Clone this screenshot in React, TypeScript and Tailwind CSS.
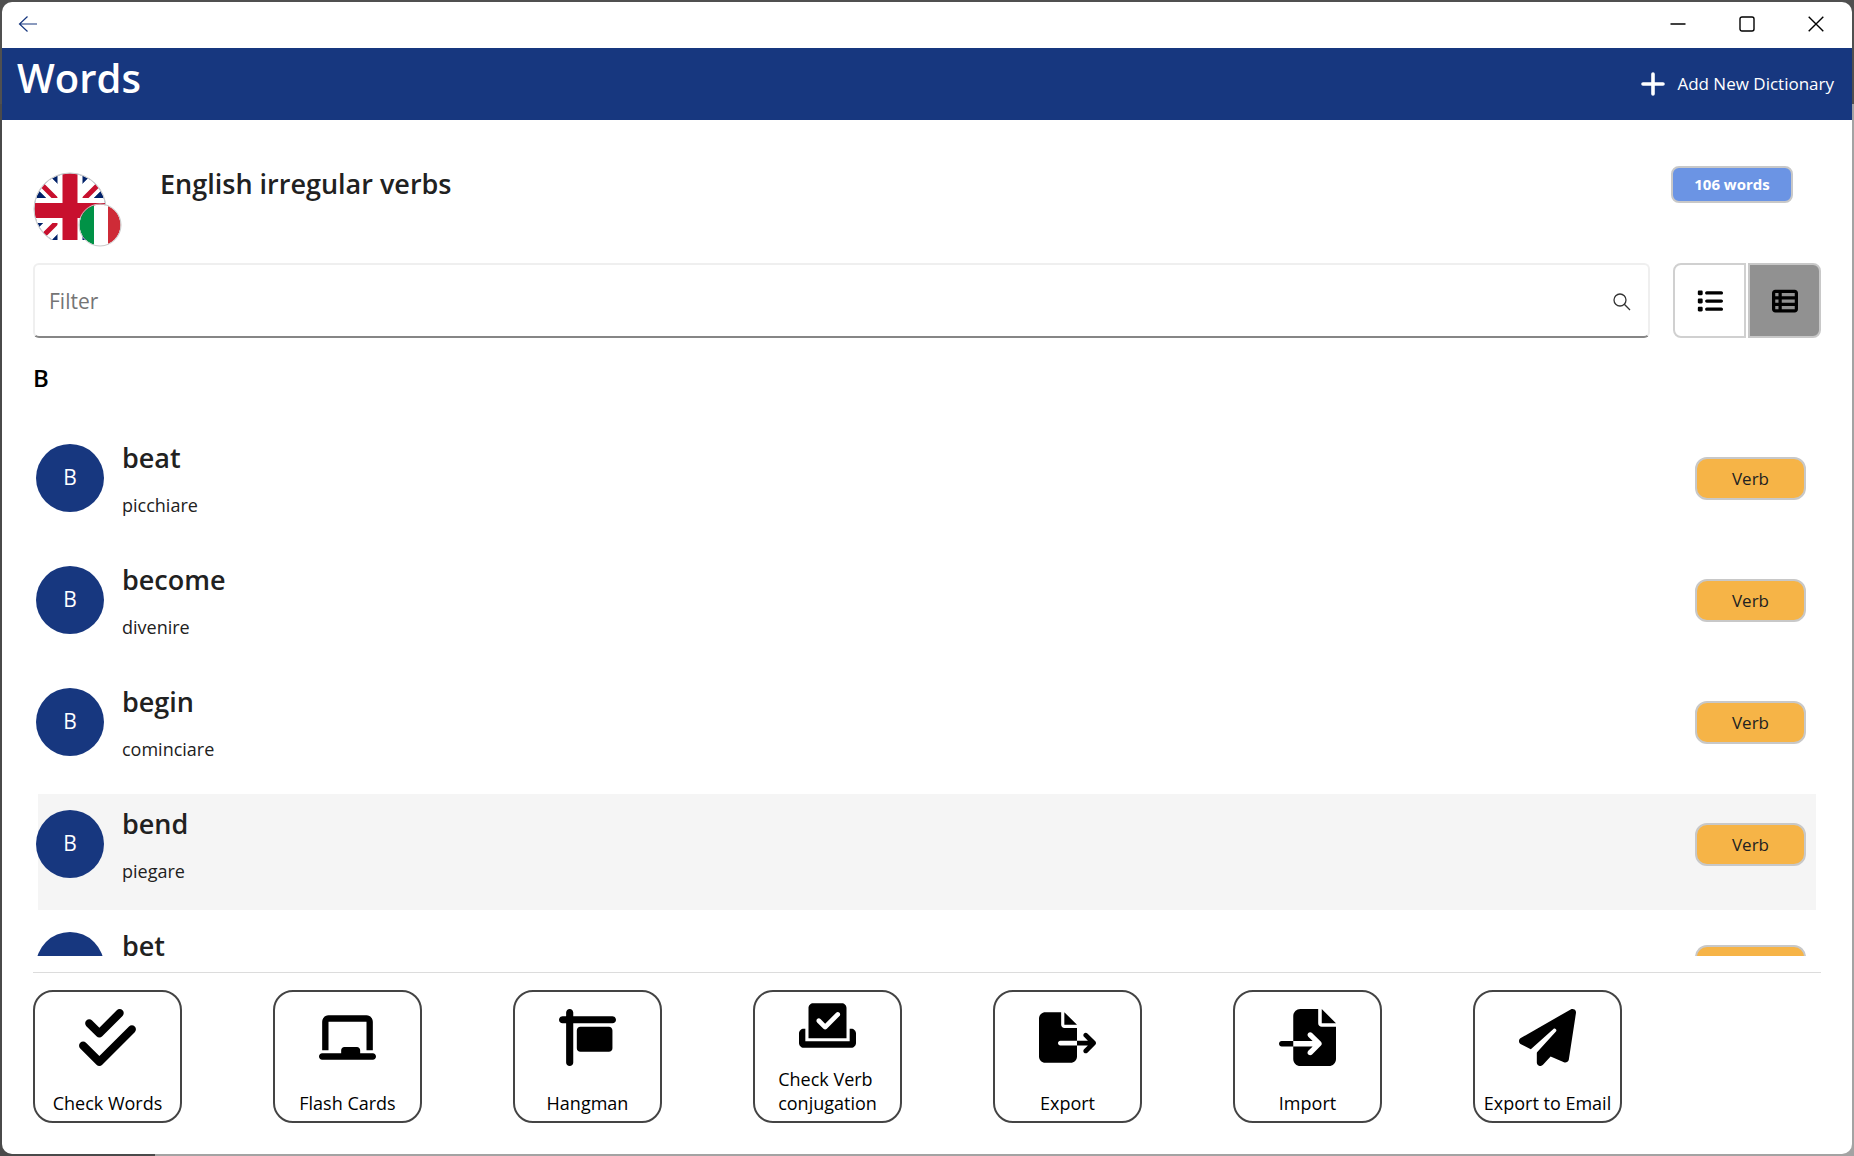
import { useState } from "react";
import type { IconType } from "react-icons";
import {
  FaChalkboard,
  FaCheckDouble,
  FaCheckToSlot,
  FaFileExport,
  FaFileImport,
  FaList,
  FaPaperPlane,
  FaSignHanging,
  FaTableList,
} from "react-icons/fa6";

const words = [
  { word: "beat", translation: "picchiare" },
  { word: "become", translation: "divenire" },
  { word: "begin", translation: "cominciare" },
  { word: "bend", translation: "piegare", active: true },
  { word: "bet", translation: "scommettere" },
];

const actions: { label: string; icon: IconType; size: number }[] = [
  { label: "Check Words", icon: FaCheckDouble, size: 65 },
  { label: "Flash Cards", icon: FaChalkboard, size: 57 },
  { label: "Hangman", icon: FaSignHanging, size: 57 },
  { label: "Check Verb\nconjugation", icon: FaCheckToSlot, size: 57 },
  { label: "Export", icon: FaFileExport, size: 57 },
  { label: "Import", icon: FaFileImport, size: 57 },
  { label: "Export to Email", icon: FaPaperPlane, size: 57 },
];

function TitleBar() {
  return (
    <div className="flex h-[46px] shrink-0 items-center justify-between pr-7 pb-0.5 pl-4">
      <button type="button" aria-label="Back" className="text-[#17377f]">
        <svg width="20" height="18" viewBox="0 0 20 18" fill="none" stroke="currentColor" strokeWidth="1.2">
          <path d="M19 9H1.5M9.5 1.5L1.5 9l8 7.5" />
        </svg>
      </button>
      <div className="flex gap-[53px] text-black">
        <button type="button" aria-label="Minimize">
          <svg width="16" height="16" viewBox="0 0 16 16" fill="none" stroke="currentColor" strokeWidth="1.4">
            <path d="M0.5 8h15" />
          </svg>
        </button>
        <button type="button" aria-label="Maximize">
          <svg width="16" height="16" viewBox="0 0 16 16" fill="none" stroke="currentColor" strokeWidth="1.4">
            <rect x="1" y="1" width="14" height="14" rx="2" />
          </svg>
        </button>
        <button type="button" aria-label="Close">
          <svg width="16" height="16" viewBox="0 0 16 16" fill="none" stroke="currentColor" strokeWidth="1.4">
            <path d="M0.7 0.7l14.6 14.6M15.3 0.7L0.7 15.3" />
          </svg>
        </button>
      </div>
    </div>
  );
}

function LanguageFlags() {
  return (
    <svg width="90" height="78" viewBox="0 0 90 78" role="img" aria-label="English to Italian">
      <defs>
        <clipPath id="uk">
          <circle cx="37" cy="37" r="35.5" />
        </clipPath>
        <clipPath id="uk-base">
          <rect width="90" height="68" />
        </clipPath>
        <clipPath id="it">
          <circle cx="67" cy="53" r="20.5" />
        </clipPath>
      </defs>
      <g clipPath="url(#uk-base)">
        <g clipPath="url(#uk)">
          <rect width="74" height="74" fill="#012169" />
          <path d="M-3 -3L77 77M77 -3L-3 77" stroke="#fff" strokeWidth="18" />
          <path d="M-3 1L37 41M79 -1L39 39M37 37L-3 77M39 37L79 77" stroke="#c8102e" strokeWidth="5" />
          <path d="M37 0V74M0 38.5H74" stroke="#fff" strokeWidth="25" />
          <path d="M37 0V74M0 38.5H74" stroke="#c8102e" strokeWidth="15" />
        </g>
        <circle cx="37" cy="37" r="36" fill="none" stroke="#c8c8c8" />
      </g>
      <g clipPath="url(#it)">
        <rect x="46" y="31" width="15" height="44" fill="#009246" />
        <rect x="61" y="31" width="14" height="44" fill="#fff" />
        <rect x="75" y="31" width="14" height="44" fill="#ce2b37" />
      </g>
      <circle cx="67" cy="53" r="21" fill="none" stroke="#c8c8c8" />
    </svg>
  );
}

export default function App() {
  const [view, setView] = useState<"list" | "table">("table");

  return (
    <div className="h-screen bg-[linear-gradient(to_bottom,#505050_104px,transparent_104px),linear-gradient(to_right,#4a4a4a_155px,#a3a3a3_155px)] p-0.5 font-['Open_Sans','Noto_Sans',sans-serif]">
      <div className="flex h-full flex-col overflow-hidden rounded-[10px] bg-white">
        <TitleBar />
        <header className="flex h-[72px] shrink-0 items-start justify-between bg-[#17377f] pr-[18px] pl-[15px] text-white">
          <h1 className="pt-0.5 text-[40px] leading-[56px] font-semibold">Words</h1>
          <button type="button" className="flex items-center gap-3 self-center text-[17px]">
            <svg width="24" height="24" viewBox="0 0 24 24" stroke="currentColor" strokeWidth="3.6" strokeLinecap="round">
              <path d="M12 2v20M2 12h20" />
            </svg>
            Add New Dictionary
          </button>
        </header>

        <main className="flex min-h-0 flex-1 flex-col px-[31px] pb-[31px]">
          <section className="flex h-[143px] shrink-0 items-start pt-[46px]">
            <div className="w-[127px] pt-1.5">
              <LanguageFlags />
            </div>
            <h2 className="flex-1 text-[27px] leading-9 font-semibold text-[#212121]">English irregular verbs</h2>
            <span className="mr-7 flex h-[37px] w-[122px] items-center justify-center rounded-lg border-2 border-[#c8c8c8] bg-[#6b94e4] text-[15px] font-bold text-white">
              106 words
            </span>
          </section>

          <div className="flex h-[75px] shrink-0 gap-[23px]">
            <label className="flex flex-1 items-center rounded-md border-2 border-[#efefef] border-b-[#868686] pt-0.5 pr-4 pl-[14px]">
              <input
                type="text"
                aria-label="Filter"
                placeholder="Filter"
                className="min-w-0 flex-1 text-[21px] outline-none placeholder:text-[#757575]"
              />
              <svg width="20" height="20" viewBox="0 0 20 20" fill="none" stroke="#333" strokeWidth="1.3">
                <circle cx="8" cy="8" r="6" />
                <path d="M12.3 12.3L18 18" />
              </svg>
            </label>
            <div className="flex gap-0.5">
              <button
                type="button"
                aria-label="List view"
                aria-pressed={view === "list"}
                onClick={() => setView("list")}
                className="flex w-[73px] items-center justify-center rounded-l-lg border-2 border-[#d0d0d0] bg-white aria-pressed:bg-[#919191]"
              >
                <FaList size={26} />
              </button>
              <button
                type="button"
                aria-label="Table view"
                aria-pressed={view === "table"}
                onClick={() => setView("table")}
                className="flex w-[73px] items-center justify-center rounded-r-lg border-2 border-[#c8c8c8] bg-white aria-pressed:bg-[#919191]"
              >
                <FaTableList size={26} />
              </button>
            </div>
          </div>

          <section className="min-h-0 flex-1 overflow-hidden pt-6">
            <h3 className="text-2xl leading-8 font-semibold text-black">B</h3>
            <ul className="mt-[34px] flex flex-col gap-1.5 pr-[5px]">
              {words.map((item) => (
                <li key={item.word} className="flex h-[116px] items-start">
                  <div
                    className={
                      item.active
                        ? "ml-[5px] flex h-full flex-1 items-start bg-[#f5f5f5] pt-4"
                        : "ml-[5px] flex h-full flex-1 items-start pt-4"
                    }
                  >
                    <span className="-ml-0.5 flex size-[68px] items-center justify-center rounded-full bg-[#17377f] text-[21px] text-white">
                      B
                    </span>
                    <div className="ml-[18px] flex-1">
                      <p className="text-[27px] leading-7 font-semibold text-[#212121]">{item.word}</p>
                      <p className="mt-[21px] text-lg leading-6 text-[#212121]">{item.translation}</p>
                    </div>
                    <span className="mt-[13px] mr-2.5 flex h-[43px] w-[111px] items-center justify-center rounded-xl border-2 border-[#c8c8c8] bg-[#f6b447] text-[17px] text-[#212121]">
                      Verb
                    </span>
                  </div>
                </li>
              ))}
            </ul>
          </section>

          <footer className="mt-4 flex shrink-0 gap-[91px] border-t border-[#dcdcdc] pt-[17px]">
            {actions.map(({ label, icon: Icon, size }) => (
              <button
                key={label}
                type="button"
                className="flex h-[133px] w-[149px] shrink-0 flex-col items-center rounded-[20px] border-2 border-[#444] pb-1.5 text-lg leading-6 text-black"
              >
                <span className="flex flex-1 items-center pb-2">
                  <Icon size={size} />
                </span>
                <span className="text-left whitespace-pre-line">{label}</span>
              </button>
            ))}
          </footer>
        </main>
      </div>
    </div>
  );
}
